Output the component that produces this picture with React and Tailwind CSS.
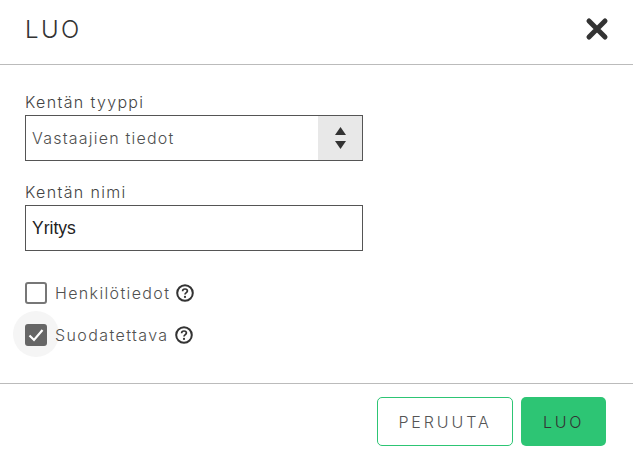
const font = "font-['Inter','Liberation_Sans',sans-serif]";

function Help() {
  return (
    <svg width="18" height="18" viewBox="0 0 18 18" className="shrink-0" fill="none">
      <circle cx="9" cy="9" r="7.8" stroke="#333" strokeWidth="2" />
      <path d="M6.6 7.2C6.6 5.9 7.7 5 9 5C10.4 5 11.4 5.9 11.4 7.1C11.4 8.7 9 8.6 9 10.6" stroke="#333" strokeWidth="1.7" />
      <circle cx="9" cy="12.9" r="1.1" fill="#333" />
    </svg>
  );
}

export default function App() {
  return (
    <div className={`w-[633px] h-[458px] bg-white overflow-hidden flex flex-col ${font} text-[#505050]`}>
      <header className="h-[65px] shrink-0 border-b border-[#bbb] flex items-center justify-between pl-[25px] pr-[25px]">
        <h1 className="text-[24px] font-light tracking-[2.4px] text-[#333] leading-none mb-[5px]">LUO</h1>
        <svg width="24" height="24" viewBox="0 0 24 24" className="mb-[7px] mr-[-1px]">
          <path d="M4 4L20 20M20 4L4 20" stroke="#333" strokeWidth="5" strokeLinecap="round" />
        </svg>
      </header>

      <main className="flex-1 px-[25px] pt-[27px] flex flex-col">
        <label className="text-[16px] font-light tracking-[1.35px] leading-[20px] mb-[3px] text-[#444]">Kentän tyyppi</label>
        <div className="w-[338px] h-[46px] border border-[#555] flex items-stretch">
          <span className="flex-1 pl-[6px] flex items-center text-[16px] font-light tracking-[1.22px]">Vastaajien tiedot</span>
          <span className="w-[44px] bg-[#e8e8e8] flex flex-col items-center justify-center gap-[6px]">
            <svg width="11" height="8" viewBox="0 0 11 8"><path d="M5.5 0L11 8H0Z" fill="#333" /></svg>
            <svg width="11" height="8" viewBox="0 0 11 8"><path d="M5.5 8L0 0H11Z" fill="#333" /></svg>
          </span>
        </div>

        <label className="text-[16px] font-light tracking-[1.35px] leading-[20px] mt-[21px] mb-[3px] text-[#444]">Kentän nimi</label>
        <div className="w-[338px] h-[46px] border border-[#555] pl-[6px] flex items-center font-['Liberation_Sans',sans-serif] text-[17.5px] text-[#222]">Yritys</div>

        <div className="flex items-center h-[22px] mt-[31px]">
          <span className="w-[22px] h-[22px] rounded-[3px] border-2 border-[#777] bg-white"></span>
          <span className="ml-[8px] text-[16px] font-light tracking-[1.36px]">Henkilötiedot</span>
          <span className="ml-[6px]"><Help /></span>
        </div>

        <div className="flex items-center h-[22px] mt-[20px] relative">
          <span className="absolute left-[-12px] top-[-13px] w-[46px] h-[46px] rounded-full bg-[#f5f5f5]"></span>
          <span className="relative w-[22px] h-[22px] rounded-[3px] bg-[#666] flex items-center justify-center">
            <svg width="16" height="14" viewBox="0 0 16 14" fill="none"><path d="M1.5 7.5L6 12L14.5 2" stroke="#fff" strokeWidth="2.2" /></svg>
          </span>
          <span className="relative ml-[8px] text-[16px] font-light tracking-[1.4px]">Suodatettava</span>
          <span className="ml-[6px]"><Help /></span>
        </div>
      </main>

      <footer className="h-[75px] shrink-0 border-t border-[#bbb] flex justify-end items-start pt-[13px] pr-[27px] gap-[8px]">
        <button className="w-[136px] h-[49px] rounded-[5px] border border-[#2dc574] bg-white text-[16px] font-light tracking-[2.9px] text-[#555]">PERUUTA</button>
        <button className="w-[85px] h-[49px] rounded-[5px] bg-[#2dc574] text-[16px] font-light tracking-[2.7px] text-[#333]">LUO</button>
      </footer>
    </div>
  );
}
